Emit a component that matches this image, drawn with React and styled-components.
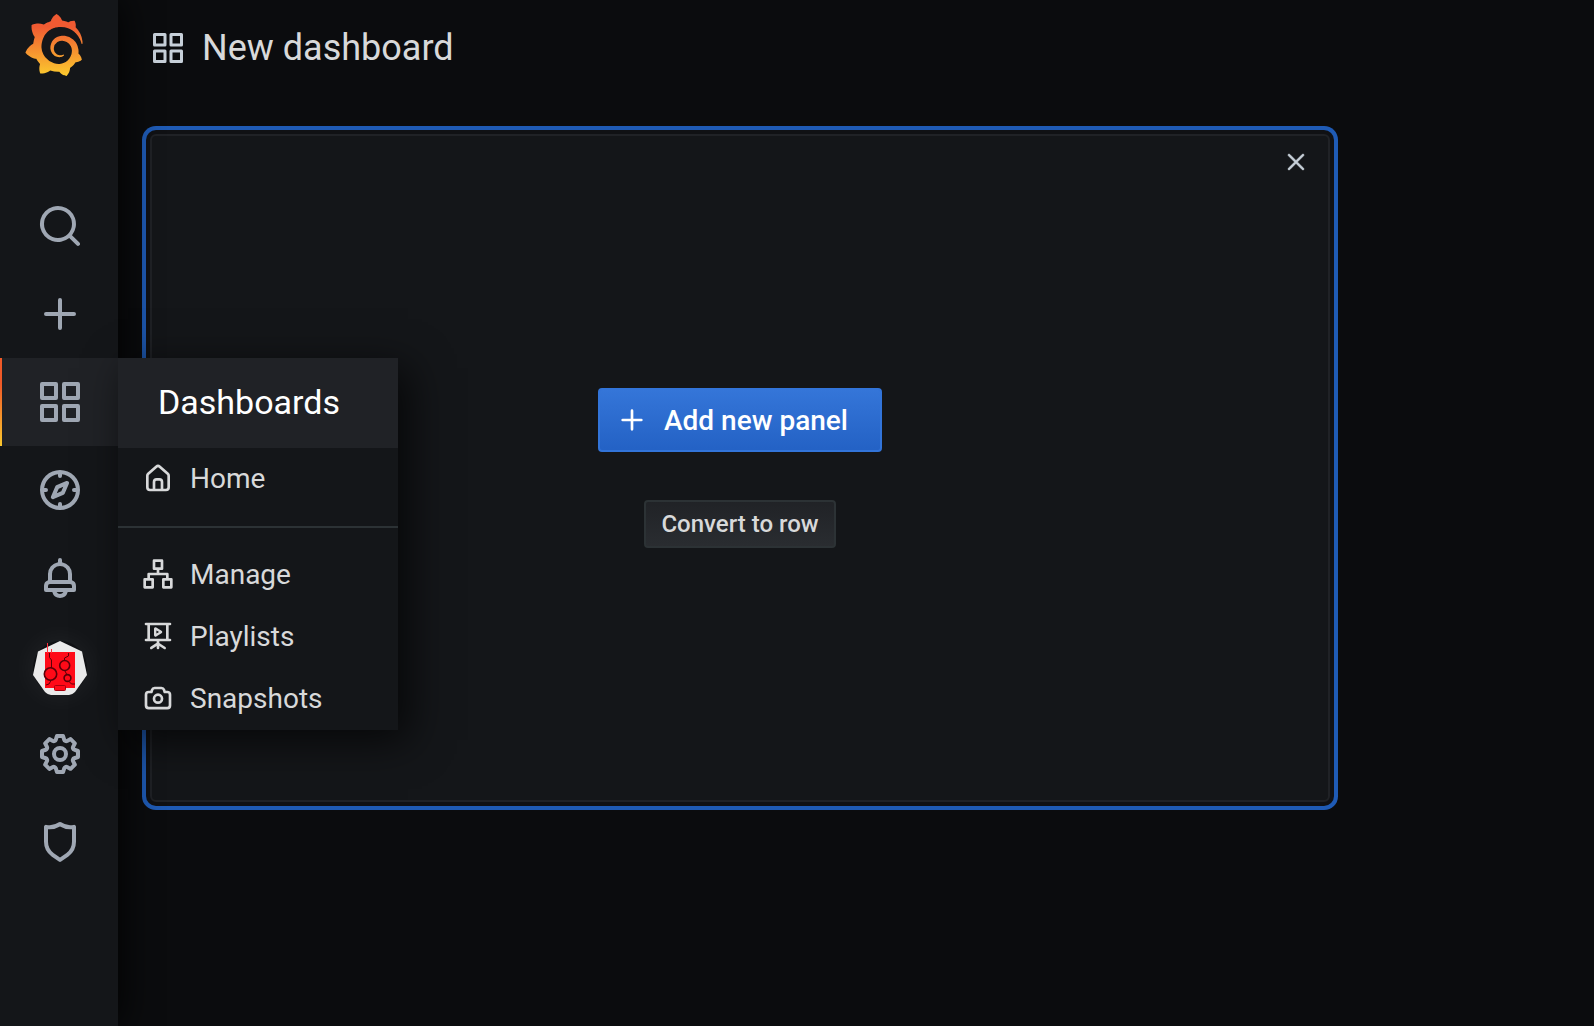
import React from "react";
import styled, { createGlobalStyle, css } from "styled-components";
import { SiGrafana } from "react-icons/si";

const GlobalStyle = createGlobalStyle`
  *, *::before, *::after { box-sizing: border-box; }
  body {
    margin: 0;
    background: #0b0c0e;
    color: #d8d9da;
    font-family: Roboto, "Liberation Sans", sans-serif;
    -webkit-font-smoothing: antialiased;
  }
  button { font-family: inherit; cursor: pointer; }
  a { color: inherit; text-decoration: none; }
  ul { list-style: none; margin: 0; padding: 0; }
`;

const ICONS = {
  search:
    "M21.71,20.29,18,16.61A9,9,0,1,0,16.61,18l3.68,3.68a1,1,0,0,0,1.42,0A1,1,0,0,0,21.71,20.29ZM11,18a7,7,0,1,1,7-7A7,7,0,0,1,11,18Z",
  plus: "M19,11H13V5a1,1,0,0,0-2,0v6H5a1,1,0,0,0,0,2h6v6a1,1,0,0,0,2,0V13h6a1,1,0,0,0,0-2Z",
  apps: "M10,13H3a1,1,0,0,0-1,1v7a1,1,0,0,0,1,1h7a1,1,0,0,0,1-1V14A1,1,0,0,0,10,13ZM9,20H4V15H9ZM21,2H14a1,1,0,0,0-1,1v7a1,1,0,0,0,1,1h7a1,1,0,0,0,1-1V3A1,1,0,0,0,21,2ZM20,9H15V4h5Zm1,4H14a1,1,0,0,0-1,1v7a1,1,0,0,0,1,1h7a1,1,0,0,0,1-1V14A1,1,0,0,0,21,13Zm-1,7H15V15h5ZM10,2H3A1,1,0,0,0,2,3v7a1,1,0,0,0,1,1h7a1,1,0,0,0,1-1V3A1,1,0,0,0,10,2ZM9,9H4V4H9Z",
  compass:
    "M12,2A10,10,0,1,0,22,12,10,10,0,0,0,12,2Zm1,17.93V19a1,1,0,0,0-2,0v.93A8,8,0,0,1,4.07,13H5a1,1,0,0,0,0-2H4.07A8,8,0,0,1,11,4.07V5a1,1,0,0,0,2,0V4.07A8,8,0,0,1,19.93,11H19a1,1,0,0,0,0,2h.93A8,8,0,0,1,13,19.93ZM15.14,7.55l-5,2.12a1,1,0,0,0-.52.52l-2.12,5a1,1,0,0,0,.21,1.1,1,1,0,0,0,.7.3.93.93,0,0,0,.4-.09l5-2.12a1,1,0,0,0,.52-.52l2.12-5a1,1,0,0,0-1.31-1.31Zm-2.49,5.1-2.28,1,1-2.28,2.28-1Z",
  bell: "M18,13.18V10a6,6,0,0,0-5-5.91V3a1,1,0,0,0-2,0V4.09A6,6,0,0,0,6,10v3.18A3,3,0,0,0,4,16v2a1,1,0,0,0,1,1H8.14a4,4,0,0,0,7.72,0H19a1,1,0,0,0,1-1V16A3,3,0,0,0,18,13.18ZM8,10a4,4,0,0,1,8,0v3H8Zm4,10a2,2,0,0,1-1.72-1h3.44A2,2,0,0,1,12,20Zm6-3H6V16a1,1,0,0,1,1-1H17a1,1,0,0,1,1,1Z",
  cog: "M21.32,9.55l-1.89-.63.89-1.78A1,1,0,0,0,20.13,6L18,3.87a1,1,0,0,0-1.15-.19l-1.78.89-.63-1.89A1,1,0,0,0,13.5,2h-3a1,1,0,0,0-.95.68L8.92,4.57,7.14,3.68A1,1,0,0,0,6,3.87L3.87,6a1,1,0,0,0-.19,1.15l.89,1.78-1.89.63A1,1,0,0,0,2,10.5v3a1,1,0,0,0,.68.95l1.89.63-.89,1.78A1,1,0,0,0,3.87,18L6,20.13a1,1,0,0,0,1.15.19l1.78-.89.63,1.89a1,1,0,0,0,.95.68h3a1,1,0,0,0,.95-.68l.63-1.89,1.78.89A1,1,0,0,0,18,20.13L20.13,18a1,1,0,0,0,.19-1.15l-.89-1.78,1.89-.63A1,1,0,0,0,22,13.5v-3A1,1,0,0,0,21.32,9.55ZM20,12.78l-1.2.4A2,2,0,0,0,17.64,16l.57,1.14-1.1,1.1L16,17.64a2,2,0,0,0-2.79,1.16l-.4,1.2H11.22l-.4-1.2A2,2,0,0,0,8,17.64l-1.14.57-1.1-1.1L6.36,16A2,2,0,0,0,5.2,13.18L4,12.78V11.22l1.2-.4A2,2,0,0,0,6.36,8L5.79,6.89l1.1-1.1L8,6.36A2,2,0,0,0,10.82,5.2l.4-1.2h1.56l.4,1.2A2,2,0,0,0,16,6.36l1.14-.57,1.1,1.1L17.64,8a2,2,0,0,0,1.16,2.79l1.2.4ZM12,8a4,4,0,1,0,4,4A4,4,0,0,0,12,8Zm0,6a2,2,0,1,1,2-2A2,2,0,0,1,12,14Z",
  shield:
    "M19.63,3.65a1,1,0,0,0-.84-.2,8,8,0,0,1-6.22-1.27,1,1,0,0,0-1.14,0A8,8,0,0,1,5.21,3.45a1,1,0,0,0-.84.2A1,1,0,0,0,4,4.43v7.45a9,9,0,0,0,3.77,7.33l3.65,2.6a1,1,0,0,0,1.16,0l3.65-2.6A9,9,0,0,0,20,11.88V4.43A1,1,0,0,0,19.63,3.65ZM18,11.88a7,7,0,0,1-2.93,5.7L12,19.77,8.93,17.58A7,7,0,0,1,6,11.88V5.58a10,10,0,0,0,6-1.39,10,10,0,0,0,6,1.39Z",
  home: "M20,8h0L14,2.74a3,3,0,0,0-4,0L4,8a3,3,0,0,0-1,2.26V19a3,3,0,0,0,3,3H18a3,3,0,0,0,3-3V10.25A3,3,0,0,0,20,8ZM14,20H10V15a1,1,0,0,1,1-1h2a1,1,0,0,1,1,1Zm5-1a1,1,0,0,1-1,1H16V15a3,3,0,0,0-3-3H11a3,3,0,0,0-3,3v5H6a1,1,0,0,1-1-1V10.25a1,1,0,0,1,.34-.75l6-5.25a1,1,0,0,1,1.32,0l6,5.25a1,1,0,0,1,.34.75Z",
  sitemap:
    "M22,15H20V12a1,1,0,0,0-1-1H13V9h2a1,1,0,0,0,1-1V2a1,1,0,0,0-1-1H9A1,1,0,0,0,8,2V8A1,1,0,0,0,9,9h2v2H5a1,1,0,0,0-1,1v3H2a1,1,0,0,0-1,1v6a1,1,0,0,0,1,1H8a1,1,0,0,0,1-1V16a1,1,0,0,0-1-1H6V13H18v2H16a1,1,0,0,0-1,1v6a1,1,0,0,0,1,1h6a1,1,0,0,0,1-1V16A1,1,0,0,0,22,15ZM7,17v4H3V17ZM10,7V3h4V7ZM21,21H17V17h4Z",
  presentation:
    "M21,14H20V4h1a1,1,0,0,0,0-2H3A1,1,0,0,0,3,4H4V14H3a1,1,0,0,0,0,2h8v1.15l-4.55,3A1,1,0,0,0,7,22a.94.94,0,0,0,.55-.17L11,19.55V21a1,1,0,0,0,2,0V19.55l3.45,2.28A.94.94,0,0,0,17,22a1,1,0,0,0,.55-1.83l-4.55-3V16h8a1,1,0,0,0,0-2Zm-3,0H6V4H18ZM9,6.7V11.3A1.1,1.1,0,0,0,10.7,12.3L14.6,10A1.15,1.15,0,0,0,14.6,8L10.7,5.7A1.1,1.1,0,0,0,9,6.7ZM10.8,7.8L12.8,9L10.8,10.2Z",
  camera:
    "M19,6.5H17.72l-.32-1a3,3,0,0,0-2.84-2H9.44A3,3,0,0,0,6.6,5.55l-.32,1H5a3,3,0,0,0-3,3v8a3,3,0,0,0,3,3H19a3,3,0,0,0,3-3v-8A3,3,0,0,0,19,6.5Zm1,11a1,1,0,0,1-1,1H5a1,1,0,0,1-1-1v-8a1,1,0,0,1,1-1H7a1,1,0,0,0,1-.68l.54-1.64a1,1,0,0,1,.95-.68h5.12a1,1,0,0,1,.95.68l.54,1.64A1,1,0,0,0,17,8.5h2a1,1,0,0,1,1,1Zm-8-9a4,4,0,1,0,4,4A4,4,0,0,0,12,8.5Zm0,6a2,2,0,1,1,2-2A2,2,0,0,1,12,14.5Z",
  times:
    "M13.41,12l6.3-6.29a1,1,0,1,0-1.42-1.42L12,10.59,5.71,4.29A1,1,0,0,0,4.29,5.71L10.59,12l-6.3,6.29a1,1,0,0,0,0,1.42,1,1,0,0,0,1.42,0L12,13.41l6.29,6.3a1,1,0,0,0,1.42,0,1,1,0,0,0,0-1.42Z",
};

const IconSvg = styled.svg`
  display: block;
  flex: none;
  width: ${(p) => p.$size}px;
  height: ${(p) => p.$size}px;
  fill: currentColor;
`;

function Icon({ name, size }) {
  return (
    <IconSvg $size={size} viewBox="0 0 24 24" aria-hidden="true">
      <path fillRule="evenodd" d={ICONS[name]} />
    </IconSvg>
  );
}

const Page = styled.div`
  display: flex;
  min-height: 100vh;
`;

const Sidebar = styled.nav`
  position: relative;
  z-index: 1;
  flex: none;
  width: 118px;
  background: #141619;
  box-shadow: 0 0 40px #000;
`;

const LogoLink = styled.a`
  display: block;
  height: 182px;
  padding: 14px 0 0 23px;
`;

const GradientDefs = styled.svg`
  display: block;
  width: 0;
  height: 0;
`;

const Logo = styled(SiGrafana)`
  display: block;
  width: 62px;
  height: 62px;

  path { fill: url(#logo-gradient); }
`;

const NavItem = styled.li`
  position: relative;
`;

const NavLink = styled.a`
  display: flex;
  align-items: center;
  justify-content: center;
  height: 88px;
  border-left: 2px solid transparent;
  color: #9fa7b3;
  ${(p) =>
    p.$active &&
    css`
      background: #202226;
      border-image: linear-gradient(#f05a28 30%, #fbca2e) 1;
    `}
`;

const AvatarFrame = styled.span`
  display: block;
  width: 54px;
  height: 54px;
  margin-top: 4px;
  border-radius: 50%;
  background: #0f1013;
  box-shadow: 0 0 28px 2px rgba(255, 255, 255, 0.06);
`;

const AvatarSvg = styled.svg`
  display: block;
  width: 54px;
  height: 54px;
`;

function Avatar() {
  return (
    <AvatarFrame>
      <AvatarSvg viewBox="0 0 54 54" aria-hidden="true">
        <path d="M27 0L49 10.5L54 34L42 51Q39 54 36 54H18Q15 54 12 51L0 34L5 10.5Z" fill="#eaeaea" />
        <rect x="12" y="11" width="30" height="36" fill="#ff0a18" />
        <path d="M14.5 2V12M18.5 8V12" stroke="#ff3340" fill="none" />
        <rect x="21.5" y="44.5" width="11" height="5" rx="1" fill="#ff0a18" stroke="#a8000c" />
        <g fill="none" stroke="#5a0008">
          <path d="M16.5 12V16.5L18.5 19V27M35.5 12V15L31.5 17V20M32 30L33.5 33M18 39.5L16 43L13 44M36 40.5L38.5 43H42" />
          <circle cx="17.5" cy="33" r="6.2" strokeWidth="1.6" />
          <circle cx="31.7" cy="24.5" r="5" strokeWidth="1.6" />
          <circle cx="34.5" cy="37" r="3.4" strokeWidth="1.6" />
        </g>
      </AvatarSvg>
    </AvatarFrame>
  );
}

const Flyout = styled.div`
  position: absolute;
  top: 0;
  left: 100%;
  width: 280px;
  background: #141619;
  box-shadow: 10px 10px 40px rgba(0, 0, 0, 0.7);
`;

const FlyoutTitle = styled.a`
  display: block;
  padding: 0 40px 2px;
  background: #202226;
  color: #fff;
  font-size: 34px;
  line-height: 88px;
`;

const FlyoutLink = styled.a`
  display: flex;
  align-items: center;
  gap: 16px;
  padding: 0 24px;
  font-size: 28px;
  line-height: 62px;

  svg { margin-bottom: 2px; }
`;

const Divider = styled.li`
  height: 2px;
  margin: 16px 0;
  background: #2c3235;
`;

const Main = styled.main`
  flex: 1;
  min-width: 0;
  padding: 0 28px 0 32px;
`;

const Toolbar = styled.header`
  display: flex;
  align-items: center;
  gap: 16px;
  height: 134px;
  padding-bottom: 38px;
`;

const ToolbarIcon = styled.span`
  color: #c7d0d9;
`;

const PageTitle = styled.h1`
  margin: 0;
  font-size: 36px;
  font-weight: 400;
  line-height: 54px;
`;

const DashboardGrid = styled.div`
  display: grid;
  grid-template-columns: repeat(6, 1fr);
`;

const Panel = styled.section`
  grid-column: span 5;
  display: flex;
  flex-direction: column;
  min-height: 668px;
  background: #141619;
  border: 2px solid #202226;
  border-radius: 6px;
  box-shadow: 0 0 0 4px #101114, 0 0 0 8px #1f5bb5;
`;

const PanelHeader = styled.div`
  display: flex;
  align-items: center;
  justify-content: flex-end;
  height: 52px;
  padding: 0 20px;
`;

const CloseButton = styled.button`
  padding: 0;
  border: 0;
  background: none;
  color: #c7d0d9;

  svg {
    stroke: currentColor;
    stroke-width: 0.6;
  }
`;

const PanelBody = styled.div`
  flex: 1;
  display: flex;
  flex-direction: column;
  align-items: center;
  justify-content: center;
  gap: 48px;
  padding-bottom: 52px;
`;

const Button = styled.button`
  display: inline-flex;
  align-items: center;
  gap: 16px;
  border: 2px solid;
  border-radius: 4px;
  font-weight: 500;
  white-space: nowrap;
  ${(p) =>
    p.$primary
      ? css`
          height: 64px;
          padding: 0 32px 0 16px;
          border-color: #3274d9;
          background: linear-gradient(#3576d9, #2361c4) border-box;
          color: #fff;
          font-size: 28px;
        `
      : css`
          height: 48px;
          padding: 0 15px;
          border-color: #2c3235;
          background: linear-gradient(#202226, #2a2d31) border-box;
          color: #d8d9da;
          font-size: 24px;
        `}
`;

const DASHBOARD_LINKS = [
  { icon: "sitemap", label: "Manage" },
  { icon: "presentation", label: "Playlists" },
  { icon: "camera", label: "Snapshots" },
];

const NAV = [
  { icon: "search", label: "Search" },
  { icon: "plus", label: "Create" },
  { icon: "apps", label: "Dashboards", active: true },
  { icon: "compass", label: "Explore" },
  { icon: "bell", label: "Alerting" },
  { icon: "avatar", label: "Profile" },
  { icon: "cog", label: "Configuration" },
  { icon: "shield", label: "Server admin" },
];

function MenuLink({ icon, label }) {
  return (
    <li>
      <FlyoutLink href="#">
        <Icon name={icon} size={32} />
        {label}
      </FlyoutLink>
    </li>
  );
}

function DashboardsMenu() {
  return (
    <Flyout>
      <FlyoutTitle href="#">Dashboards</FlyoutTitle>
      <ul>
        <MenuLink icon="home" label="Home" />
        <Divider role="separator" />
        {DASHBOARD_LINKS.map((item) => (
          <MenuLink key={item.label} {...item} />
        ))}
      </ul>
    </Flyout>
  );
}

export default function App() {
  return (
    <>
      <GlobalStyle />
      <Page>
        <Sidebar aria-label="Main">
          <GradientDefs aria-hidden="true">
            <linearGradient id="logo-gradient" x1="0" y1="0" x2="0" y2="1">
              <stop offset="0.2" stopColor="#f05a32" />
              <stop offset="1" stopColor="#fbca2e" />
            </linearGradient>
          </GradientDefs>
          <LogoLink href="#" aria-label="Grafana home">
            <Logo aria-hidden="true" />
          </LogoLink>
          <ul>
            {NAV.map(({ icon, label, active }) => (
              <NavItem key={label}>
                <NavLink href="#" aria-label={label} $active={active}>
                  {icon === "avatar" ? <Avatar /> : <Icon name={icon} size={48} />}
                </NavLink>
                {active && <DashboardsMenu />}
              </NavItem>
            ))}
          </ul>
        </Sidebar>
        <Main>
          <Toolbar>
            <ToolbarIcon>
              <Icon name="apps" size={36} />
            </ToolbarIcon>
            <PageTitle>New dashboard</PageTitle>
          </Toolbar>
          <DashboardGrid>
            <Panel>
              <PanelHeader>
                <CloseButton type="button" aria-label="Close">
                  <Icon name="times" size={24} />
                </CloseButton>
              </PanelHeader>
              <PanelBody>
                <Button type="button" $primary>
                  <Icon name="plus" size={32} />
                  Add new panel
                </Button>
                <Button type="button">Convert to row</Button>
              </PanelBody>
            </Panel>
          </DashboardGrid>
        </Main>
      </Page>
    </>
  );
}
